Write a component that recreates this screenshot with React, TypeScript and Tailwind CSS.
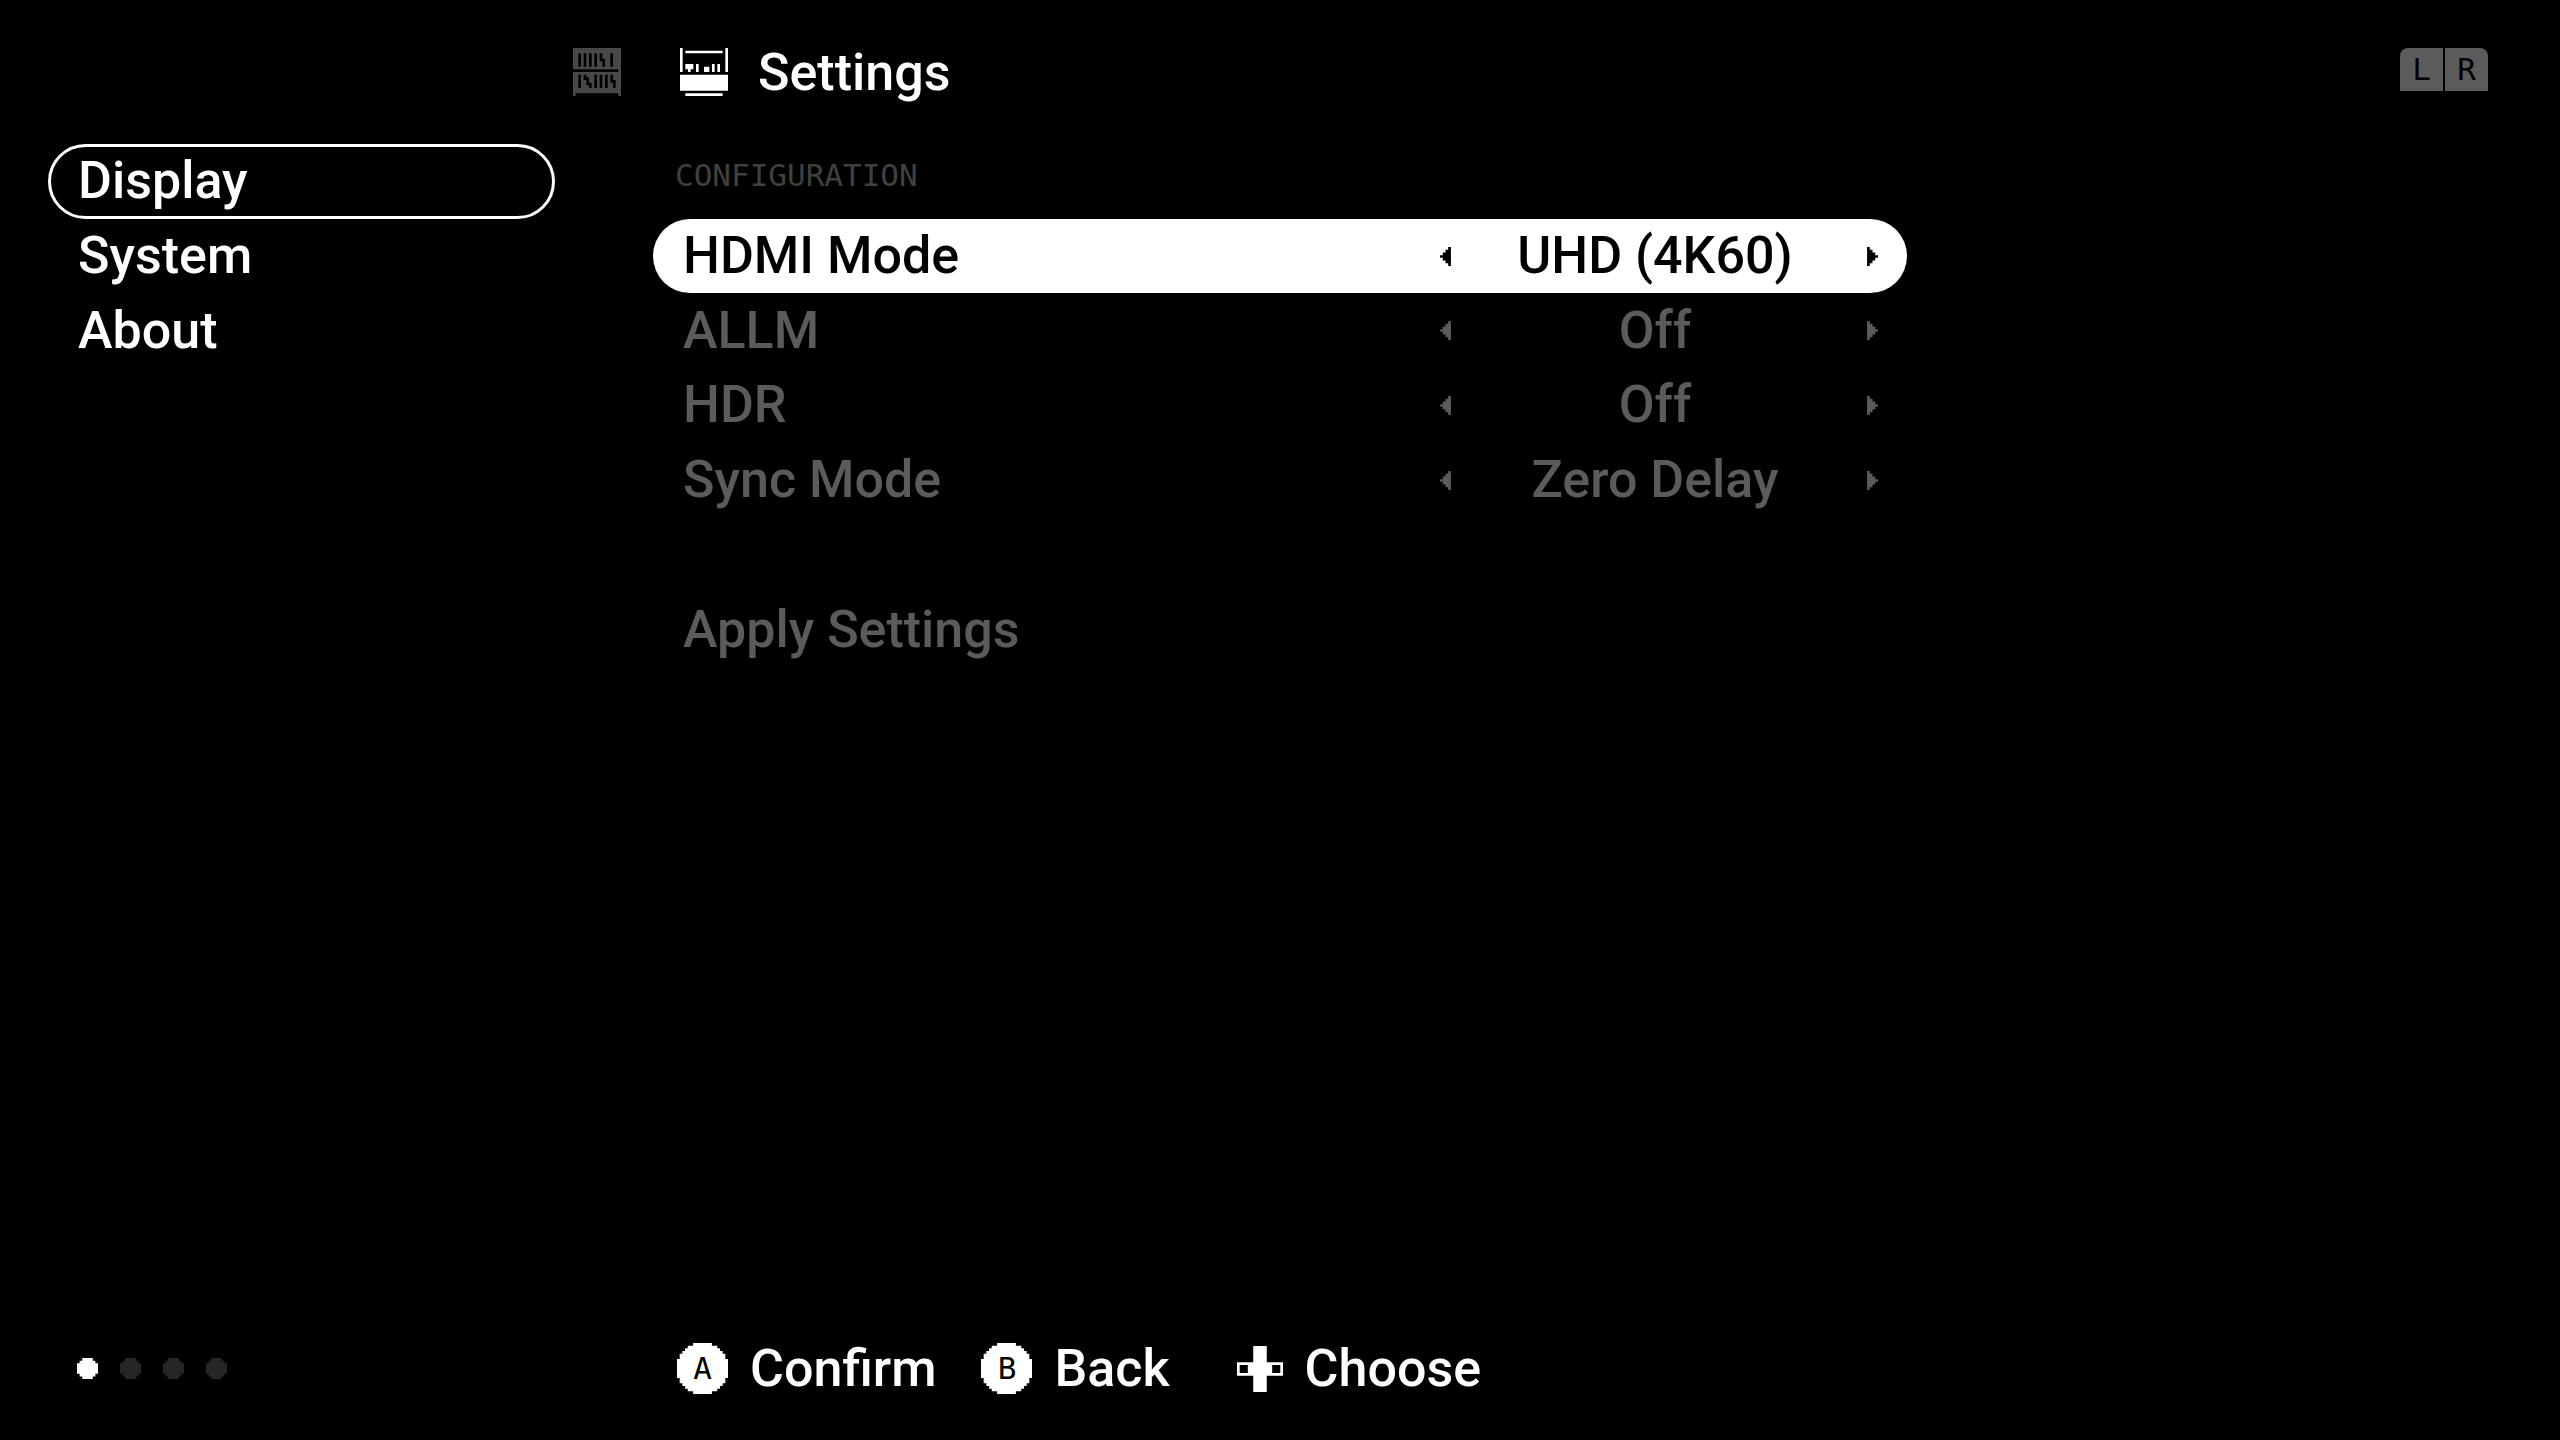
import { useState } from 'react';
import type { ReactNode } from 'react';

const SHELF = [
    '##################',
    '##################',
    '##.#.#.#.#.###.###',
    '##.#.#.#.#.###.###',
    '##.#.#.#.#..##.###',
    '##.#.#.#.##.##.###',
    '##.#.#.#.##.##.###',
    '##################',
    '.................#',
    '##################',
    '##.#.###.#.#.#.###',
    '##.#..##.#.#.#.###',
    '##.##.##.#.#.#..##',
    '##.##..#.#.#.##.##',
    '##.###.#.#.#.##.##',
    '##################',
    '##################',
    '#................#',
];

const WORKBENCH = [
    '#................#',
    '#.##############.#',
    '#................#',
    '#................#',
    '#................#',
    '#................#',
    '#.###.#.....#.#..#',
    '#.###.#..##.#.#..#',
    '#..#..#..##.#.#..#',
    '..................',
    '##################',
    '##################',
    '##################',
    '##################',
    '##################',
    '##################',
    '..................',
    '..##############..',
];

const DISC = [
    '......#######......',
    '....###########....',
    '...#############...',
    '..###############..',
    '.#################.',
    '.#################.',
    '###################',
    '###################',
    '###################',
    '###################',
    '###################',
    '###################',
    '###################',
    '.#################.',
    '.#################.',
    '..###############..',
    '...#############...',
    '....###########....',
    '......#######......',
];

const DPAD = [
    '......#####......',
    '......#####......',
    '......#####......',
    '......#####......',
    '......#####......',
    '......#####......',
    '#################',
    '#...#########...#',
    '#...#########...#',
    '#...#########...#',
    '#################',
    '......#####......',
    '......#####......',
    '......#####......',
    '......#####......',
    '......#####......',
    '......#####......',
];

const DOT = [
    '..####..',
    '.######.',
    '########',
    '########',
    '########',
    '########',
    '.######.',
    '..####..',
];

const ARROW_LEFT = ['...#', '..##', '.###', '####', '.###', '..##', '...#'];
const ARROW_RIGHT = ['#...', '##..', '###.', '####', '###.', '##..', '#...'];

// Draws a bitmap, one path run per horizontal stretch of set pixels
function PixelIcon({ rows, className }: { rows: string[]; className: string }) {
    const d = rows
        .flatMap((row, y) => [...row.matchAll(/#+/g)].map((m) => `M${m.index} ${y}h${m[0].length}v1h-${m[0].length}z`))
        .join('');

    return (
        <svg
            viewBox={`0 0 ${rows[0].length} ${rows.length}`}
            className={`shrink-0 ${className}`}
            fill="currentColor"
            aria-hidden="true"
        >
            <path d={d} />
        </svg>
    );
}

const TABS = ['Display', 'System', 'About'];

const OPTIONS = [
    { label: 'HDMI Mode', values: ['UHD (4K60)', 'FHD (1080p)'] },
    { label: 'ALLM', values: ['Off', 'On'] },
    { label: 'HDR', values: ['Off', 'On'] },
    { label: 'Sync Mode', values: ['Zero Delay', 'Single Buffer'] },
];

interface OptionRowProps {
    label: string;
    values: string[];
    selected: boolean;
    onFocus: () => void;
}

function OptionRow({ label, values, selected, onFocus }: OptionRowProps) {
    const [index, setIndex] = useState(0);
    const step = (by: number) => setIndex((index + by + values.length) % values.length);

    return (
        <div
            role="group"
            aria-label={label}
            onClick={onFocus}
            className={`flex items-center justify-between rounded-full pl-[30px] pr-[29px] ${selected ? 'bg-white text-black' : 'text-[#5b5b5b]'}`}
        >
            <span>{label}</span>
            <div className="flex w-[438px] items-center">
                <button type="button" aria-label={`Previous ${label}`} onClick={() => step(-1)}>
                    <PixelIcon rows={ARROW_LEFT} className="h-[19px] w-[11px]" />
                </button>
                <output className="flex-1 pr-2 text-center">{values[index]}</output>
                <button type="button" aria-label={`Next ${label}`} onClick={() => step(1)}>
                    <PixelIcon rows={ARROW_RIGHT} className="h-[19px] w-[11px]" />
                </button>
            </div>
        </div>
    );
}

function Hint({ icon, children }: { icon: ReactNode; children: ReactNode }) {
    return (
        <button type="button" className="flex items-center gap-[22px]">
            {icon}
            <span>{children}</span>
        </button>
    );
}

function LetterDisc({ letter }: { letter: string }) {
    return (
        <span className="relative block size-[51px]">
            <PixelIcon rows={DISC} className="size-full" />
            <span className="absolute inset-0 flex items-center justify-center font-['DejaVu_Sans_Mono',monospace] text-[31px] leading-none font-normal text-black">
                {letter}
            </span>
        </span>
    );
}

export default function App() {
    const [tab, setTab] = useState(0);
    const [row, setRow] = useState(0);

    return (
        <div className="flex min-h-screen flex-col bg-black font-['Roboto',sans-serif] text-[52px] leading-none font-medium text-white">
            <header className="flex h-24 items-end pr-[72px]">
                <button type="button" aria-label="Library" className="ml-[573px] text-[#484848]">
                    <PixelIcon rows={SHELF} className="size-12" />
                </button>
                <div className="ml-[59px] flex flex-1 items-center gap-[30px]">
                    <PixelIcon rows={WORKBENCH} className="size-12" />
                    <h1 className="h-12 leading-[50px]">Settings</h1>
                </div>
                <div className="flex h-12 gap-0.5 font-['DejaVu_Sans_Mono',monospace] text-[31px] font-normal text-black">
                    <button type="button" className="h-[43px] w-[43px] rounded-tl-lg bg-[#5b5b5b]">L</button>
                    <button type="button" className="h-[43px] w-[43px] rounded-tr-lg bg-[#5b5b5b]">R</button>
                </div>
            </header>

            <div className="mt-12 flex flex-1 items-start">
                <nav className="ml-12 grid h-56 w-[507px] grid-rows-3">
                    {TABS.map((name, i) => (
                        <button
                            key={name}
                            type="button"
                            onClick={() => setTab(i)}
                            className={`rounded-full border-3 pl-[27px] text-left ${i === tab ? 'border-white' : 'border-transparent'}`}
                        >
                            {name}
                        </button>
                    ))}
                </nav>

                <main className="ml-[98px] grid h-[523px] w-full max-w-[1254px] grid-rows-7">
                    <h2 className="pt-4 pl-[22px] font-['DejaVu_Sans_Mono',monospace] text-[31px] font-normal text-[#404040]">
                        CONFIGURATION
                    </h2>
                    {OPTIONS.map((option, i) => (
                        <OptionRow key={option.label} {...option} selected={i === row} onFocus={() => setRow(i)} />
                    ))}
                    <button type="button" className="row-start-7 pl-[30px] text-left text-[#5b5b5b]">
                        Apply Settings
                    </button>
                </main>
            </div>

            <footer className="flex h-[97px] items-start">
                <div className="flex h-[51px] w-[677px] items-center gap-[22px] pl-[77px]">
                    {[0, 1, 2, 3].map((page) => (
                        <PixelIcon
                            key={page}
                            rows={DOT}
                            className={`size-[21px] ${page === 0 ? 'text-white' : 'text-[#262626]'}`}
                        />
                    ))}
                </div>
                <div className="flex h-[51px] items-center gap-[45px]">
                    <Hint icon={<LetterDisc letter="A" />}>Confirm</Hint>
                    <Hint icon={<LetterDisc letter="B" />}>Back</Hint>
                    <Hint icon={<PixelIcon rows={DPAD} className="ml-[22px] size-[46px]" />}>Choose</Hint>
                </div>
            </footer>
        </div>
    );
}
